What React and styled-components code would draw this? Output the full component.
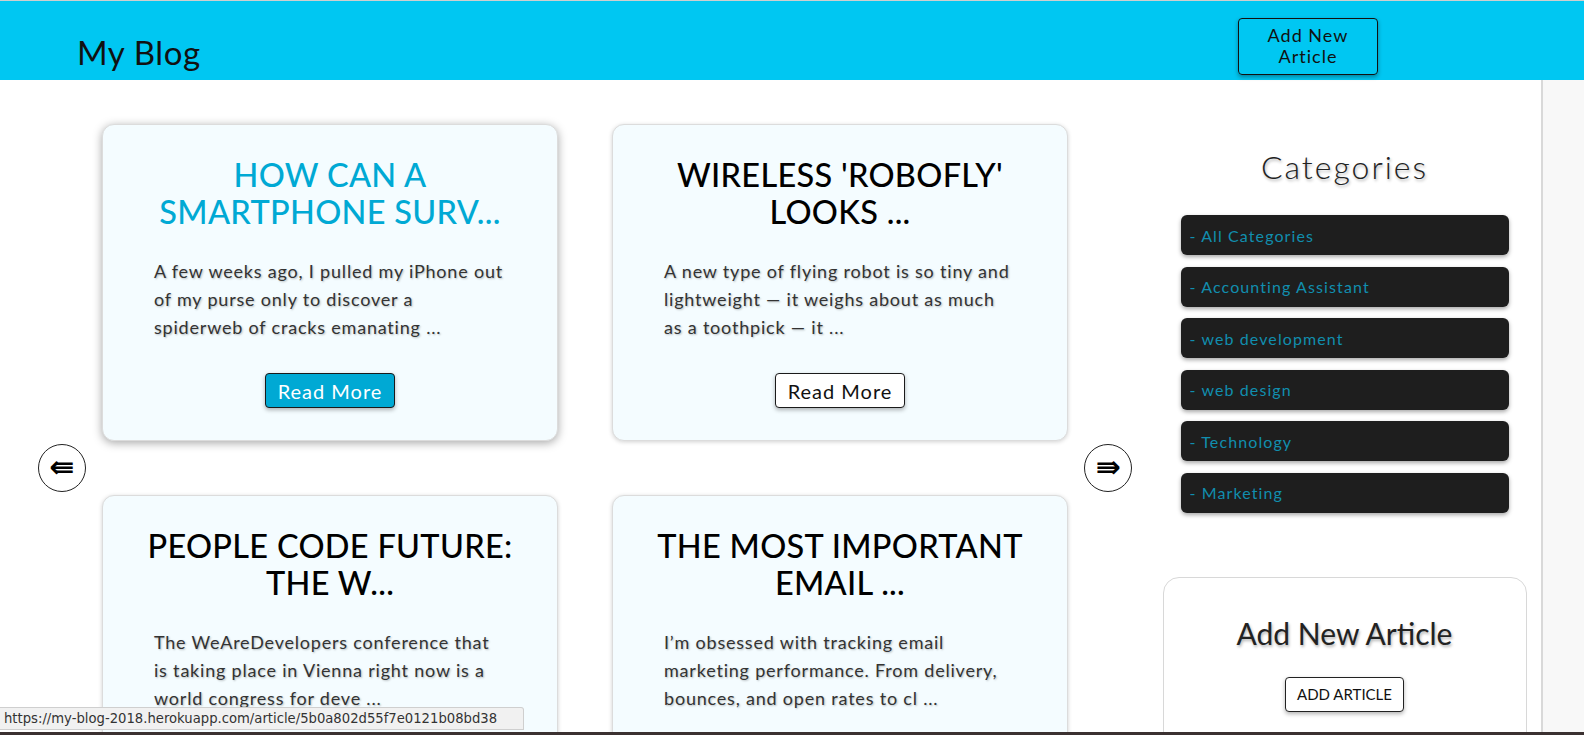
import React from 'react';
import styled, { createGlobalStyle } from 'styled-components';

const GlobalStyle = createGlobalStyle`
  * { box-sizing: border-box; }
  body {
    margin: 0;
    background: #fff;
    font-family: Lato, "Open Sans", sans-serif;
    overflow: hidden;
  }
`;

const Page = styled.div`
  width: 1584px;
  min-height: 735px;
`;

const Header = styled.header`
  height: 80px;
  background: #00c7f2;
  border-top: 1px solid #cfcfcf;
  display: flex;
  align-items: center;
  justify-content: space-between;
  padding: 0 206px 0 77px;
`;

const Brand = styled.h1`
  margin: 22px 0 0;
  font-size: 33px;
  font-weight: 400;
  color: #111;
  letter-spacing: 0.6px;
`;

const HeaderButton = styled.button`
  width: 140px;
  height: 57px;
  margin-top: 11px;
  background: transparent;
  border: 1px solid #111;
  border-radius: 4px;
  box-shadow: 0 2px 4px rgba(0, 0, 0, 0.35);
  font-family: inherit;
  font-size: 18px;
  line-height: 21px;
  letter-spacing: 1px;
  color: #111;
`;

const Main = styled.main`
  display: flex;
  min-height: 655px;
`;

const Content = styled.div`
  flex: 1;
  display: flex;
  align-items: flex-start;
  padding: 44px 0 0 38px;
`;

const Slider = styled.div`
  display: flex;
  align-items: center;
  gap: 16px;
`;

const ArrowButton = styled.button`
  width: 48px;
  height: 48px;
  border-radius: 50%;
  border: 1px solid #222;
  background: #fff;
  display: flex;
  align-items: center;
  justify-content: center;
  padding: 0 0 2px;
  font-family: "DejaVu Sans", sans-serif;
  font-size: 30px;
  font-weight: 700;
  line-height: 1;
  color: #000;
`;

const Grid = styled.div`
  display: grid;
  grid-template-columns: 456px 456px;
  gap: 54px;
`;

const Card = styled.article`
  height: 317px;
  background: #f4fcff;
  border: 1px solid #dcdcdc;
  border-radius: 12px;
  padding: 31px 20px 0;
  display: flex;
  flex-direction: column;
  align-items: center;
  box-shadow: ${(p) =>
    p.$active ? '0 2px 10px rgba(0,0,0,0.35)' : '0 1px 4px rgba(0,0,0,0.18)'};
`;

const CardTitle = styled.h2`
  margin: 0;
  font-size: 32.5px;
  line-height: 37px;
  font-weight: 500;
  text-align: center;
  letter-spacing: 0.3px;
  color: ${(p) => (p.$active ? '#00a9d4' : '#000')};
`;

const Excerpt = styled.p`
  margin: 27px 0 0;
  align-self: stretch;
  padding-left: 31px;
  white-space: nowrap;
  font-size: 18px;
  letter-spacing: 0.8px;
  line-height: 28px;
  color: #333;
  text-shadow: 1px 1px 2px rgba(0, 0, 0, 0.25);
`;

const ReadMore = styled.button`
  margin-top: 32px;
  height: 35px;
  padding: 0 12px;
  border: 1px solid #1a1a1a;
  border-radius: 4px;
  font-family: inherit;
  font-size: 20px;
  letter-spacing: 1px;
  background: ${(p) => (p.$active ? '#00a9d4' : '#fff')};
  color: ${(p) => (p.$active ? '#fff' : '#111')};
  box-shadow: 0 2px 4px rgba(0, 0, 0, 0.3);
`;

const Sidebar = styled.aside`
  width: 365px;
  margin-left: 30px;
  padding-top: 23px;
  display: flex;
  flex-direction: column;
  align-items: center;
`;

const SideTitle = styled.h3`
  margin: 0;
  font-size: 32px;
  line-height: 40px;
  font-weight: 300;
  letter-spacing: 2px;
  color: #222;
  text-shadow: 1px 2px 3px rgba(0, 0, 0, 0.3);
`;

const CategoryList = styled.ul`
  list-style: none;
  margin: 28px 0 0;
  padding: 0;
  width: 328px;
  display: flex;
  flex-direction: column;
  gap: 11.5px;
`;

const Category = styled.li`
  height: 40px;
  background: #1e1e1e;
  border-radius: 6px;
  padding: 0 9px;
  display: flex;
  align-items: center;
  font-size: 16px;
  letter-spacing: 1.1px;
  color: #118eae;
  box-shadow: 0 2px 4px rgba(0, 0, 0, 0.35);
`;

const AddCard = styled.section`
  margin-top: 64px;
  width: 364px;
  height: 200px;
  border: 1px solid #d8d8d8;
  border-radius: 16px;
  background: #fff;
  display: flex;
  flex-direction: column;
  align-items: center;
  padding-top: 35px;
`;

const AddTitle = styled.h3`
  margin: 0;
  font-size: 30px;
  line-height: 40px;
  font-weight: 400;
  color: #222;
  text-shadow: 1px 2px 3px rgba(0, 0, 0, 0.3);
`;

const AddButton = styled.button`
  margin-top: 24px;
  height: 35px;
  padding: 0 11px;
  background: #fff;
  border: 1px solid #222;
  border-radius: 4px;
  font-family: inherit;
  font-size: 15px;
  color: #111;
  box-shadow: 0 2px 4px rgba(0, 0, 0, 0.3);
`;

const Gutter = styled.div`
  width: 43px;
  margin-left: auto;
  background: #f8f8f8;
  border-left: 2px solid #d9d9d9;
`;

const StatusBar = styled.div`
  position: fixed;
  left: 0;
  bottom: 5px;
  width: 524px;
  height: 23px;
  padding: 0 4px;
  background: #f1f1f1;
  border: 1px solid #cfcfcf;
  border-left: none;
  border-top-right-radius: 3px;
  font-family: "DejaVu Sans", sans-serif;
  font-size: 13.2px;
  line-height: 21px;
  color: #333;
`;

const Frame = styled.div`
  position: fixed;
  left: 0;
  right: 0;
  bottom: 0;
  height: 3px;
  background: #3b3131;
`;

const articles = [
  {
    title: 'How can a smartphone surv...',
    lines: ['A few weeks ago, I pulled my iPhone out', 'of my purse only to discover a', 'spiderweb of cracks emanating ...'],
    active: true,
  },
  {
    title: "Wireless 'RoboFly' looks ...",
    lines: ['A new type of flying robot is so tiny and', 'lightweight — it weighs about as much', 'as a toothpick — it ...'],
  },
  {
    title: 'People code future: the w...',
    lines: ['The WeAreDevelopers conference that', 'is taking place in Vienna right now is a', 'world congress for deve ...'],
  },
  {
    title: 'The most important email ...',
    lines: ['I’m obsessed with tracking email', 'marketing performance. From delivery,', 'bounces, and open rates to cl ...'],
  },
];

const categories = [
  'All Categories',
  'Accounting Assistant',
  'web development',
  'web design',
  'Technology',
  'Marketing',
];

export default function App() {
  return (
    <Page>
      <GlobalStyle />
      <Header>
        <Brand>My Blog</Brand>
        <HeaderButton>Add New Article</HeaderButton>
      </Header>
      <Main>
        <Content>
          <Slider>
            <ArrowButton>⇚</ArrowButton>
            <Grid>
              {articles.map((a) => (
                <Card key={a.title} $active={a.active}>
                  <CardTitle $active={a.active}>{a.title.toUpperCase()}</CardTitle>
                  <Excerpt>
                    {a.lines.map((l, i) => (
                      <React.Fragment key={i}>
                        {l}
                        {i < a.lines.length - 1 && <br />}
                      </React.Fragment>
                    ))}
                  </Excerpt>
                  <ReadMore $active={a.active}>Read More</ReadMore>
                </Card>
              ))}
            </Grid>
            <ArrowButton>⇛</ArrowButton>
          </Slider>
          <Sidebar>
            <SideTitle>Categories</SideTitle>
            <CategoryList>
              {categories.map((c) => (
                <Category key={c}>- {c}</Category>
              ))}
            </CategoryList>
            <AddCard>
              <AddTitle>Add New Article</AddTitle>
              <AddButton>ADD ARTICLE</AddButton>
            </AddCard>
          </Sidebar>
        </Content>
        <Gutter />
      </Main>
      <StatusBar>https://my-blog-2018.herokuapp.com/article/5b0a802d55f7e0121b08bd38</StatusBar>
      <Frame />
    </Page>
  );
}
